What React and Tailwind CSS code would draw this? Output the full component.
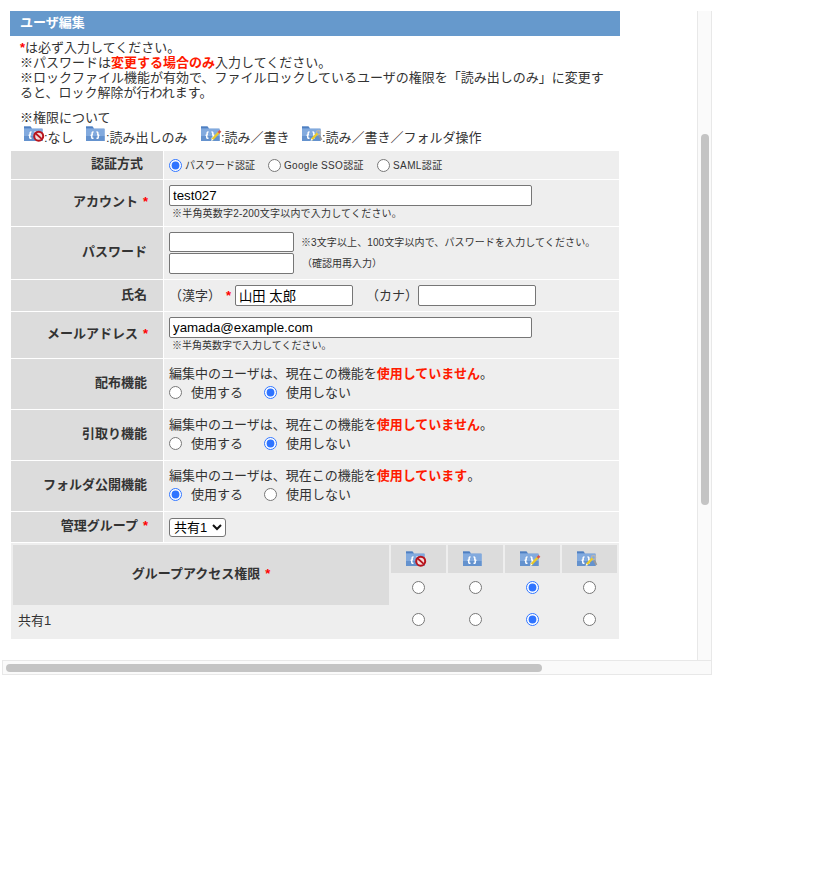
const FONT = { fontFamily: '"Liberation Sans","Noto Sans CJK JP",sans-serif' };

// folder icon with an overlay for each permission level
function FolderIcon({ type }) {
  return (
    <svg width="21" height="16" viewBox="0 0 21 16" className="block shrink-0">
      <path d="M0 .5h6.500L8 2.500h10.500V15H0z" fill="#6d9ad6" />
      <path d="M0 .5h6.500L7.500 2H0z" fill="#4f7fc0" />
      <path d="M0 3h18.500v12H0z" fill="#82aade" />
      <path d="M0 10h18.500v5H0z" fill="#6492ce" />
      <path d="M7.500 5.700Q5.800 6 6.200 8T4.700 9Q6.200 9.500 5.800 11T7.500 12.300" fill="none" stroke="#fff" strokeWidth="1.500" />
      <path d="M10.500 5.700Q12.200 6 11.800 8T13.300 9Q11.800 9.500 12.200 11T10.500 12.300" fill="none" stroke="#fff" strokeWidth="1.500" />
      {type === 'none' && (
        <g>
          <circle cx="14.700" cy="10.200" r="4.500" fill="#f4dada" stroke="#b8141c" strokeWidth="2" />
          <path d="M11.700 7.500l6 5.400" stroke="#b8141c" strokeWidth="1.800" />
        </g>
      )}
      {type === 'write' && (
        <g>
          <path d="M11 13.800l7-7.500" stroke="#eccb2a" strokeWidth="2.400" />
          <path d="M17.500 6.800l2-2" stroke="#d9534f" strokeWidth="2.400" />
          <path d="M10 15l1-2.400 1.500 1.300z" fill="#fff" />
        </g>
      )}
      {type === 'admin' && (
        <g>
          <path d="M16.500 8l3 6" stroke="#9a9a9a" strokeWidth="1.800" />
          <circle cx="16.500" cy="6.500" r="2" fill="none" stroke="#b5b5b5" strokeWidth="1.300" />
          <path d="M9.500 13.800l6-6.500" stroke="#eccb2a" strokeWidth="2.400" />
          <path d="M8.500 15l1-2.400 1.500 1.300z" fill="#fff" />
        </g>
      )}
    </svg>
  );
}

function Radio({ checked }) {
  return <input type="radio" checked={!!checked} readOnly className="m-0 block h-[13px] w-[13px] shrink-0 accent-[#2f74ff]" />;
}

function TextInput({ value, className }) {
  return (
    <input
      type="text"
      defaultValue={value}
      className={`block rounded-[2px] border border-[#767676] bg-white px-[3px] text-[13.3px] text-black ${className}`}
    />
  );
}

function Req() {
  return <span className="font-bold text-[#ff0000]">*</span>;
}

function Row({ label, req, height, pr = 'pr-[16px]', children, className = '' }) {
  return (
    <div className={`flex gap-[1px] ${height}`}>
      <div className={`flex w-[152px] shrink-0 items-center justify-end bg-[#dcdcdc] pb-[2px] text-[13px] font-bold ${req ? 'pr-[15px]' : pr}`}>
        {label}
        {req && <span className="ml-[5px] text-[#ff0000]">*</span>}
      </div>
      <div className={`flex-1 bg-[#eeeeee] pl-[5px] ${className}`}>{children}</div>
    </div>
  );
}

function FeatureRow({ label, status, on, height }) {
  return (
    <Row label={label} height={height} className="pt-[7px]">
      <div className="h-[15px] text-[13px] leading-[15px]">
        編集中のユーザは、現在この機能を<span className="font-bold text-[#ff1a00]">{status}</span>。
      </div>
      <div className="mt-[4px] flex h-[15px] items-center text-[13px] leading-[15px]">
        <Radio checked={on} />
        <span className="ml-[9px] w-[73px]">使用する</span>
        <Radio checked={!on} />
        <span className="ml-[9px]">使用しない</span>
      </div>
    </Row>
  );
}

function Legend({ type, text, className }) {
  return (
    <div className={`flex items-start ${className}`}>
      <div className="mt-[1px]">
        <FolderIcon type={type} />
      </div>
      <span className="-ml-[1px] mt-[4px] leading-[18px]">{text}</span>
    </div>
  );
}

function Form() {
  return (
    <div className="flex w-[608px] flex-col gap-[1px] text-[#333]">
      <Row label="認証方式" pr="pr-[20px]" height="h-[28px]" className="flex items-center text-[10px]">
        <Radio checked />
        <span className="ml-[3px] w-[83px]">パスワード認証</span>
        <Radio />
        <span className="ml-[3px] w-[93px] tracking-[0.3px]">Google SSO認証</span>
        <Radio />
        <span className="ml-[3px] tracking-[0.4px]">SAML認証</span>
      </Row>
      <Row label="アカウント" req height="h-[46px]" className="pt-[5px]">
        <TextInput value="test027" className="h-[21px] w-[363px]" />
        <div className="mt-[1px] pl-[3px] text-[10px] leading-[14px] tracking-[0.2px]">※半角英数字2-200文字以内で入力してください。</div>
      </Row>
      <Row label="パスワード" height="h-[52px]" className="flex flex-col gap-[1px] pt-[5px]">
        <div className="flex items-center">
          <TextInput className="h-[20px] w-[125px]" />
          <span className="ml-[7px] text-[10px] tracking-[0.1px]">※3文字以上、100文字以内で、パスワードを入力してください。</span>
        </div>
        <div className="flex items-center">
          <TextInput className="h-[21px] w-[125px]" />
          <span className="ml-[8px] text-[10px]">（確認用再入力）</span>
        </div>
      </Row>
      <Row label="氏名" height="h-[31px]" className="flex items-center text-[13px]">
        <span>（漢字）</span>
        <span className="ml-[5px]"><Req /></span>
        <TextInput value="山田 太郎" className="ml-[4px] h-[21px] w-[118px]" />
        <span className="ml-[13px]">（カナ）</span>
        <TextInput className="h-[21px] w-[118px]" />
      </Row>
      <Row label="メールアドレス" req height="h-[46px]" className="pt-[5px]">
        <TextInput value="yamada@example.com" className="h-[21px] w-[363px]" />
        <div className="mt-[1px] pl-[3px] text-[10px] leading-[14px]">※半角英数字で入力してください。</div>
      </Row>
      <FeatureRow label="配布機能" status="使用していません" on={false} height="h-[50px]" />
      <FeatureRow label="引取り機能" status="使用していません" on={false} height="h-[50px]" />
      <FeatureRow label="フォルダ公開機能" status="使用しています" on height="h-[50px]" />
      <Row label="管理グループ" req height="h-[30px]" className="flex items-center">
        <div className="relative h-[19px] w-[57px]">
          <select className="block h-[19px] w-[57px] appearance-none rounded-[3px] border border-[#767676] bg-white pl-[4px] text-[13px] leading-[17px] text-black">
            <option>共有1</option>
          </select>
          <svg width="10" height="7" viewBox="0 0 10 7" className="pointer-events-none absolute right-[4px] top-[6px]">
            <path d="M1 1l4 4 4-4" fill="none" stroke="#111" strokeWidth="2" />
          </svg>
        </div>
      </Row>
      <div className="grid h-[96px] grid-cols-[376px_repeat(4,55px)] grid-rows-[28px_32px_29px] gap-x-[2px] bg-[#eeeeee] pl-[2px] pt-[2px] text-[13px]">
        <div className="row-span-2 flex items-center justify-center bg-[#dcdcdc] pb-[3px] font-bold">
          グループアクセス権限<span className="ml-[5px] text-[#ff0000]">*</span>
        </div>
        {['none', 'read', 'write', 'admin'].map((t) => (
          <div key={t} className="flex items-center bg-[#dcdcdc] pl-[15px]">
            <FolderIcon type={t} />
          </div>
        ))}
        {[0, 1, 2, 3].map((i) => (
          <div key={i} className="flex items-center justify-center pb-[3px]">
            <Radio checked={i === 2} />
          </div>
        ))}
        <div className="flex items-center pl-[5px] pt-[3px]">共有1</div>
        {[0, 1, 2, 3].map((i) => (
          <div key={i} className="flex items-center justify-center">
            <Radio checked={i === 2} />
          </div>
        ))}
      </div>
    </div>
  );
}

export default function App() {
  return (
    <div style={FONT} className="h-[896px] w-[840px] bg-white pl-[2px] pt-[11px] text-[#333]">
      <div className="flex h-[664px] w-[710px] flex-col">
        <div className="flex h-[649px]">
          <div className="w-[696px] overflow-hidden border-r border-[#e8e8e8] pl-[8px]">
            <div className="flex h-[25px] w-[610px] items-center bg-[#6699cc] pb-[2px] pl-[10px] text-[13px] font-bold text-white">ユーザ編集</div>
            <div className="mt-[4px] w-[596px] pl-[10px] text-[13px] leading-[15px]">
              <p><Req />は必ず入力してください。</p>
              <p>※パスワードは<span className="font-bold text-[#ff1a00]">変更する場合のみ</span>入力してください。</p>
              <p>※ロックファイル機能が有効で、ファイルロックしているユーザの権限を「読み出しのみ」に変更すると、ロック解除が行われます。</p>
              <p className="mt-[10px]">※権限について</p>
            </div>
            <div className="flex h-[26px] items-start pl-[14px] text-[13px]">
              <Legend type="none" text=":なし" className="w-[62px]" />
              <Legend type="read" text=":読み出しのみ" className="w-[115px]" />
              <Legend type="write" text=":読み／書き" className="w-[101px]" />
              <Legend type="admin" text=":読み／書き／フォルダ操作" />
            </div>
            <div className="ml-[1px]">
              <Form />
            </div>
          </div>
          <div className="w-[14px] border-r border-[#e8e8e8] bg-[#fafafa] pl-[3px]">
            <div className="mt-[123px] h-[371px] w-[8px] rounded-[4px] bg-[#c4c4c4]" />
          </div>
        </div>
        <div className="h-[15px] border-x border-y border-[#e8e8e8] bg-[#fafafa] pl-[3px] pt-[3px]">
          <div className="h-[8px] w-[536px] rounded-[4px] bg-[#c4c4c4]" />
        </div>
      </div>
    </div>
  );
}
